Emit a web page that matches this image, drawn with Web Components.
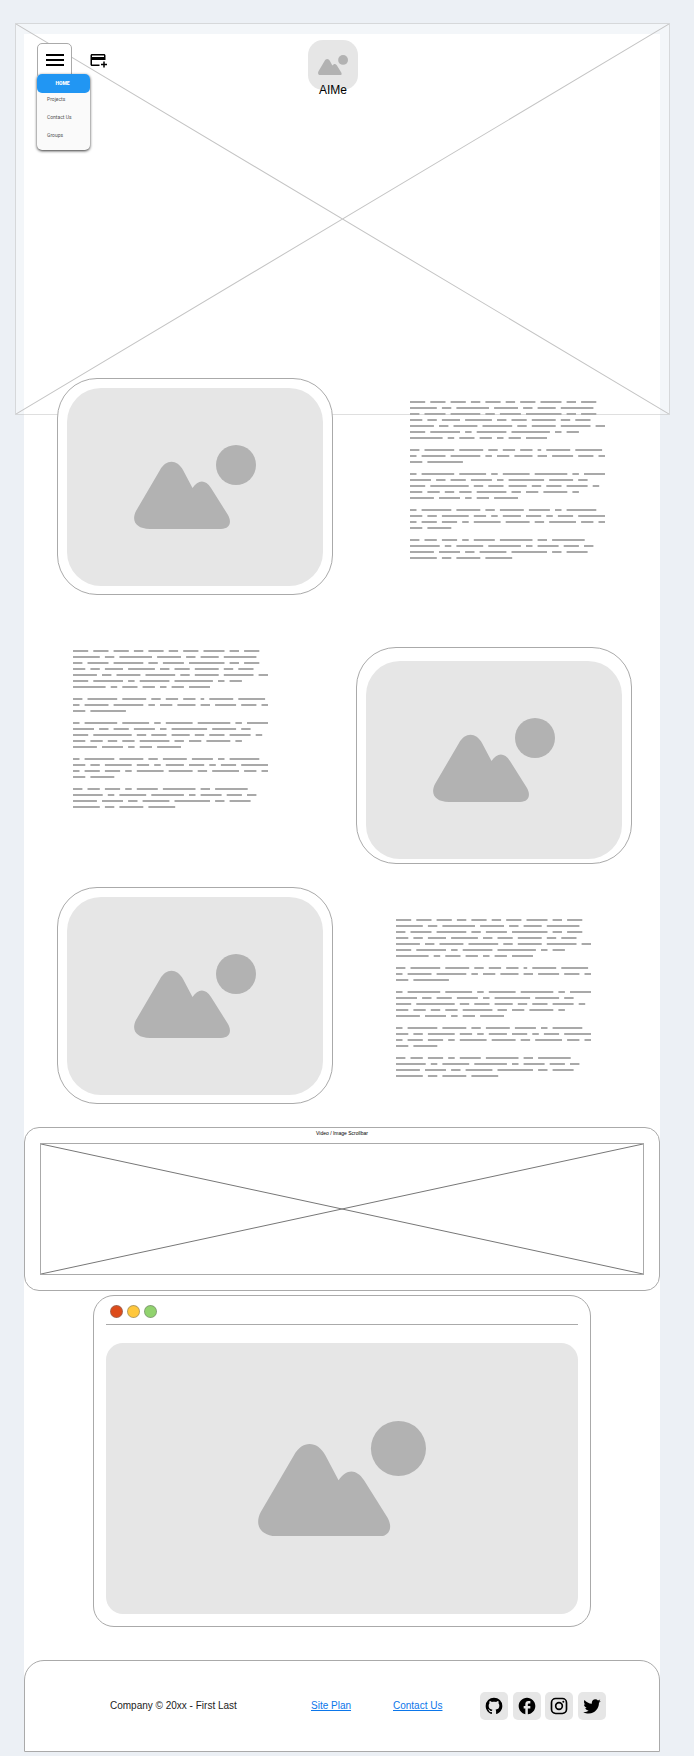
<!DOCTYPE html>
<html lang="en">
<head>
<meta charset="utf-8">
<meta name="viewport" content="width=device-width, initial-scale=1">
<title>AIMe</title>
<style>
  body { margin: 0; background: #ecf0f5; color: #000; font-family: "Liberation Sans", Arial, sans-serif; }
</style>
</head>
<body>
<page-paper>
  <hero-frame>
    <nav-menu slot="start"></nav-menu>
    <brand-logo slot="middle">AIMe</brand-logo>
  </hero-frame>
  <feature-row class="first">
    <picture-card></picture-card>
    <copy-lines></copy-lines>
  </feature-row>
  <feature-row class="second">
    <copy-lines></copy-lines>
    <picture-card class="low"></picture-card>
  </feature-row>
  <feature-row class="third">
    <picture-card></picture-card>
    <copy-lines></copy-lines>
  </feature-row>
  <media-strip>Video / Image Scrollbar</media-strip>
  <browser-window></browser-window>
  <site-footer>Company © 20xx - First Last</site-footer>
</page-paper>

<script>
const define = (name, markup, setup) => {
  const template = document.createElement('template');
  template.innerHTML = '<style>*{box-sizing:border-box}:host{display:block;box-sizing:border-box}</style>' + markup;
  customElements.define(name, class extends HTMLElement {
    constructor() {
      super();
      this.attachShadow({ mode: 'open' }).append(template.content.cloneNode(true));
      if (setup) setup(this.shadowRoot);
    }
  });
};

define('page-paper', `
  <style>
    :host { display: flex; flex-direction: column; background: #fff; margin: 34px 34px 3px 24px; }
    ::slotted(hero-frame) { margin: -11px -10px 0 -9px; }
    ::slotted(feature-row) { padding: 0 28px 0 33px; z-index: 1; }
    ::slotted(.first) { margin-top: -37px; --left: 54px; --top: 23px; }
    ::slotted(.second) { margin-top: 52px; --left: 16px; --top: 3px; }
    ::slotted(.third) { margin-top: 23px; --left: 40px; --top: 32px; }
    ::slotted(media-strip) { margin-top: 23px; }
    ::slotted(browser-window) { margin: 4px 69px 0; }
    ::slotted(site-footer) { margin-top: 33px; }
  </style>
  <slot></slot>`);

define('cross-box', `
  <style>
    :host { border: 1px solid var(--edge); color: var(--cross); min-width: 0; min-height: 0; }
    svg { display: block; width: 100%; height: 100%; }
  </style>
  <svg viewBox="0 0 100 100" preserveAspectRatio="none" stroke="currentColor" aria-hidden="true">
    <path d="M0 0L100 100M0 100L100 0" vector-effect="non-scaling-stroke"/>
  </svg>`);

define('hero-frame', `
  <style>
    :host { display: grid; height: 392px; background: rgba(255,255,255,.4); --edge: rgba(120,120,120,.24); --cross: #c4c4c4; }
    cross-box, header { grid-area: 1 / 1; }
    header { display: grid; grid-template-columns: 1fr auto 1fr; align-items: start; padding: 17px 41px 0 22px; position: relative; }
  </style>
  <cross-box></cross-box>
  <header><slot name="start"></slot><slot name="middle"></slot></header>`);

define('nav-menu', `
  <style>
    :host { display: flex; position: relative; gap: 17px; padding-top: 3px; font-family: Roboto, sans-serif; }
    button { padding: 0; color: #000; background: none; border: 0; display: grid; place-items: center; }
    .toggle { width: 35px; height: 36px; margin-bottom: -4px; background: #fff; border: 1px solid #aaa; border-radius: 5px; padding-bottom: 2px; }
    .card { width: 18px; height: 34px; }
    svg { display: block; fill: currentColor; }
    nav { position: absolute; top: 34px; left: 0; width: 53px; height: 76px; display: flex; flex-direction: column;
      background: #fafafa; border-radius: 5px; box-shadow: 0 1px 3px rgba(0,0,0,.8); }
    a { display: block; padding-left: 10px; font-size: 5px; line-height: 18px; color: #555; text-decoration: none; }
    a.on { padding: 0 2px 0 0; line-height: 19px; margin-bottom: -3px; text-align: center; font-weight: 900; color: #fff; background: #2196f3; border-radius: 5px; }
  </style>
  <button class="toggle" aria-label="Menu" aria-expanded="true">
    <svg width="18" height="12"><path d="M0 0h18v2H0zM0 5h18v2H0zM0 10h18v2H0z"/></svg>
  </button>
  <button class="card" aria-label="Add card">
    <svg width="18" height="18" viewBox="0 0 24 24"><path d="M20 4H4c-1.11 0-1.99.89-1.99 2L2 18c0 1.11.89 2 2 2h10v-2H4v-6h18V6c0-1.11-.89-2-2-2zm0 4H4V6h16v2zm4 9v2h-3v3h-2v-3h-3v-2h3v-3h2v3h3z"/></svg>
  </button>
  <nav aria-label="Main"><a class="on" href="#home">HOME</a><a href="#projects">Projects</a><a href="#contact">Contact Us</a><a href="#groups">Groups</a></nav>`);

define('image-placeholder', `
  <style>
    :host { display: grid; place-items: center; background: #e6e6e6; border-radius: 34px; }
    svg { display: block; width: var(--art, 122px); fill: #b2b2b2; }
  </style>
  <svg viewBox="0 0 122 84" role="img" aria-label="Image placeholder">
    <circle cx="102" cy="20" r="20"/>
    <path d="M16 84C2 84-3 76 2 66L26 25C32 14 43 14 49 25L58.500 43C64 35 71 34 77 43L94 70C98 77 96 84 87 84Z"/>
  </svg>`);

define('brand-logo', `
  <style>
    :host { position: relative; text-align: center; font-size: 12px; line-height: 14px; }
    image-placeholder { width: 50px; height: 50px; border-radius: 15px; --art: 30px; margin-bottom: -7px; }
    span { position: relative; }
  </style>
  <image-placeholder></image-placeholder><span><slot></slot></span>`);

define('feature-row', `
  <style>
    :host { display: grid; grid-template-columns: 1fr 1fr; column-gap: 23px; align-items: start; }
    ::slotted(copy-lines) { margin: var(--top) 0 0 var(--left); }
  </style>
  <slot></slot>`);

define('picture-card', `
  <style>
    :host { background: #fff; border: 1px solid #aaa; border-radius: 40px; padding: 9px 9px 8px; }
    :host(.low) { padding: 13px 9px 4px; }
    image-placeholder { height: 198px; }
  </style>
  <image-placeholder></image-placeholder>`);

// Word lengths, in characters, of the greeked paragraphs.
const PARAGRAPHS = [
  ['5 5 5 3 5 3 5 7 3 5', '9 3 11 8 3 6 11', '3 7 10 3 7 12 3 5', '4 3 6 9 3 5 8 3 5', '8 3 8 10 3 8 10 3', '5 10 2 10 13 2 4', '11 2 5 4 2 4 7'],
  ['3 10 8 3 4 4 1 8 9', '2 8 10 2 4 6 3 7 5 2', '4 12'],
  ['2 11 9 2 9 11 2 7', '7 3 5 7 2 12 8 3', '5 13 3 5 6 3 5 7 2', '4 4 3 4 10 3 4 8 2', '8 7 2 4 8'],
  ['2 10 8 3 8 7 2 10', '4 3 9 4 2 6 5 2 5 9', '2 5 5 2 9 8 3 9 4 2', '4 8'],
  ['3 4 5 2 7 11 3 11', '10 2 9 11 2 7 5 3', '8 7 3 9 12 3 7', '9 3 8 9']
];
define('copy-lines', `
  <style>
    :host { max-width: 196px; }
    svg { display: block; width: 100%; fill: #a9a9a9; }
  </style>
  <svg viewBox="0 0 196 160" role="img" aria-label="Placeholder text"></svg>`,
  root => {
    const advance = 2.9;
    let top = 0, path = '';
    for (const lines of PARAGRAPHS) {
      for (const line of lines) {
        let column = 0;
        for (const length of line.split(' ').map(Number)) {
          path += `M${column * advance} ${top}h${length * advance + .7}v2h-${length * advance + .7}z`;
          column += length + 2;
        }
        top += 6;
      }
      top += 6;
    }
    root.querySelector('svg').innerHTML = `<path d="${path}"/>`;
  });

define('media-strip', `
  <style>
    :host { background: #fff; border: 1px solid #aaa; border-radius: 15px; padding: 3px 15px 15px; text-align: center; font-size: 5px; line-height: 5px;
      --edge: #aaa; --cross: #777; }
    cross-box { height: 132px; margin-top: 7px; }
  </style>
  <slot></slot><cross-box></cross-box>`);

define('browser-window', `
  <style>
    :host { border: 1px solid #aaa; border-radius: 21px; padding: 0 12px 12px; }
    .bar { display: flex; gap: 4px; padding: 9px 4px 6px; border-bottom: 1px solid #aaa; }
    i { width: 13px; height: 13px; border: 1px solid #7778; border-radius: 50%; background: var(--dot); }
    image-placeholder { height: 271px; margin-top: 18px; border-radius: 17px; --art: 168px; }
  </style>
  <div class="bar"><i style="--dot:#dd4b1a"></i><i style="--dot:#ffc73b"></i><i style="--dot:#91d36e"></i></div>
  <image-placeholder></image-placeholder>`);

define('site-footer', `
  <style>
    :host { background: #fff; border: 1px solid #aaa; border-radius: 20px 20px 0 0; padding: 31px 53px 31px 85px; font-size: 10px; line-height: 12px; }
    footer { display: grid; grid-template-columns: 201fr 82fr 87fr 126px; align-items: center; color: #222; }
    a { color: #0b76ea; }
    .social { display: flex; justify-content: space-between; }
    .social a { width: 28px; height: 28px; border-radius: 5px; background: #e6e6e6; display: grid; place-items: center; color: #000; }
    svg { display: block; fill: currentColor; }
  </style>
  <footer>
    <span><slot></slot></span>
    <span><a href="#plan">Site Plan</a></span>
    <span><a href="#contact">Contact Us</a></span>
    <div class="social">
      <a href="#github" aria-label="GitHub"><svg width="20" height="20" viewBox="0 0 24 24"><path d="M12 2A10 10 0 0 0 2 12C2 16.420 4.870 20.170 8.840 21.500C9.340 21.580 9.500 21.270 9.500 21V19.310C6.730 19.910 6.140 17.970 6.140 17.970C5.680 16.810 5.030 16.500 5.030 16.500C4.120 15.880 5.100 15.900 5.100 15.900C6.100 15.970 6.630 16.930 6.630 16.930C7.500 18.450 8.970 18 9.540 17.760C9.630 17.110 9.890 16.670 10.170 16.420C7.950 16.170 5.620 15.310 5.620 11.500C5.620 10.390 6 9.500 6.650 8.790C6.550 8.540 6.200 7.500 6.750 6.150C6.750 6.150 7.590 5.880 9.500 7.170C10.290 6.950 11.150 6.840 12 6.840C12.850 6.840 13.710 6.950 14.500 7.170C16.410 5.880 17.250 6.150 17.250 6.150C17.800 7.500 17.450 8.540 17.350 8.790C18 9.500 18.380 10.390 18.380 11.500C18.380 15.320 16.040 16.160 13.810 16.410C14.170 16.720 14.500 17.330 14.500 18.260V21C14.500 21.270 14.660 21.590 15.170 21.500C19.140 20.160 22 16.420 22 12A10 10 0 0 0 12 2Z"/></svg></a>
      <a href="#facebook" aria-label="Facebook"><svg width="20" height="20" viewBox="0 0 24 24"><path d="M22 12c0-5.520-4.480-10-10-10S2 6.480 2 12c0 4.840 3.440 8.870 8 9.800V15H8v-3h2V9.500C10 7.570 11.570 6 13.500 6H16v3h-2c-.55 0-1 .45-1 1v2h3v3h-3v6.950c5.050-.5 9-4.760 9-9.950z"/></svg></a>
      <a href="#instagram" aria-label="Instagram"><svg width="20" height="20" viewBox="0 0 24 24"><g fill="none" stroke="currentColor" stroke-width="2"><rect x="3" y="3" width="18" height="18" rx="5"/><circle cx="12" cy="12" r="4"/></g><circle cx="17.200" cy="6.800" r="1.200"/></svg></a>
      <a href="#twitter" aria-label="Twitter"><svg width="20" height="20" viewBox="0 0 24 24"><path d="M22.460 6C21.690 6.350 20.860 6.580 20 6.690C20.880 6.160 21.560 5.320 21.880 4.310C21.050 4.810 20.130 5.160 19.160 5.360C18.370 4.500 17.260 4 16 4C13.650 4 11.730 5.920 11.730 8.290C11.730 8.630 11.770 8.960 11.840 9.270C8.280 9.090 5.110 7.380 3 4.790C2.630 5.420 2.420 6.160 2.420 6.940C2.420 8.430 3.170 9.750 4.330 10.500C3.620 10.500 2.960 10.300 2.380 10V10.030C2.380 12.110 3.860 13.850 5.820 14.240C5.460 14.340 5.080 14.390 4.690 14.390C4.420 14.390 4.150 14.360 3.890 14.310C4.430 16 6 17.260 7.890 17.290C6.430 18.450 4.580 19.130 2.560 19.130C2.220 19.130 1.880 19.110 1.540 19.070C3.440 20.290 5.700 21 8.120 21C16 21 20.330 14.460 20.330 8.790V8.230C21.160 7.630 21.880 6.870 22.460 6Z"/></svg></a>
    </div>
  </footer>`);
</script>
</body>
</html>
